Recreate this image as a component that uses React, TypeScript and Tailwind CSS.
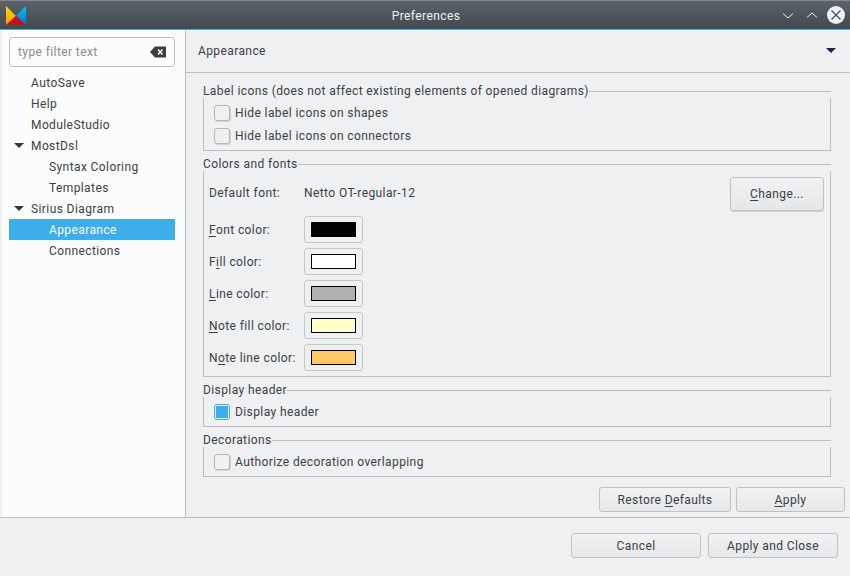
import * as React from "react"

const font = "font-['Roboto','Noto_Sans',sans-serif]"

function Mn({ children }: { children: string }) {
  return <span className="underline underline-offset-2">{children}</span>
}

function Logo() {
  return (
    <svg width="20" height="19" viewBox="0 0 20 19">
      <defs>
        <linearGradient id="yel" x1="0" y1="0" x2="0" y2="1">
          <stop offset="0" stopColor="#ffe000" />
          <stop offset="1" stopColor="#f59a00" />
        </linearGradient>
        <linearGradient id="blu" x1="0" y1="0" x2="0" y2="1">
          <stop offset="0" stopColor="#00c8f0" />
          <stop offset="1" stopColor="#0070d8" />
        </linearGradient>
      </defs>
      <polygon points="0,0 10,10 0,19" fill="url(#yel)" />
      <polygon points="20,0 10,10 20,19" fill="url(#blu)" />
      <polygon points="0,19 10,10 20,19" fill="#c8101c" />
    </svg>
  )
}

function TitleBar() {
  return (
    <div className="h-[29px] shrink-0 flex items-center bg-gradient-to-b from-[#5a636b] to-[#42494f] border-t border-[#85837f]">
      <div className="pl-[6px] pt-[1px] flex">
        <Logo />
      </div>
      <div className="flex-1 text-center text-[12px] text-[#eff0f1] pl-[44px] pt-[2px]">Preferences</div>
      <div className="flex items-center pr-[5px]">
        <svg width="12" height="8" viewBox="0 0 12 8" className="mr-[12px] mt-[1px]">
          <path d="M1 1.5 L6 6 L11 1.5" fill="none" stroke="#eff0f1" strokeWidth="1" />
        </svg>
        <svg width="12" height="8" viewBox="0 0 12 8" className="mr-[9px]">
          <path d="M1 6.5 L6 2 L11 6.5" fill="none" stroke="#eff0f1" strokeWidth="1" />
        </svg>
        <svg width="18" height="18" viewBox="0 0 18 18">
          <circle cx="9" cy="9" r="9" fill="#eff0f1" />
          <path d="M4.5 4.5 L13.5 13.5 M13.5 4.5 L4.5 13.5" stroke="#4a5158" strokeWidth="1.3" />
        </svg>
      </div>
    </div>
  )
}

function TreeRow({ label, depth, open, selected }: { label: string; depth: 0 | 1; open?: boolean; selected?: boolean }) {
  return (
    <div
      className={
        "h-[21px] flex items-center " +
        (depth === 1 ? "pl-[40px] " : "pl-[22px] ") +
        (selected ? "bg-[#3daee9] text-[#fcfcfc]" : "text-[#3b4045]")
      }
    >
      {open && (
        <svg width="10" height="5" viewBox="0 0 10 5" className="-ml-[17px] mr-[7px]">
          <polygon points="0,0 10,0 5,5" fill="#31363b" />
        </svg>
      )}
      {label}
    </div>
  )
}

function Sidebar() {
  return (
    <div className="ml-[2px] w-[184px] shrink-0 bg-[#fcfcfc] border-r border-[#bcbebf] pl-[7px] pr-[10px] pt-[7px]">
      <div className="h-[30px] border border-[#bcbebf] rounded-[3px] bg-[#fcfcfc] flex items-center justify-between pl-[8px] pr-[8px] mb-[5px]">
        <span className="text-[#8a8d8f]">type filter text</span>
        <svg width="16" height="12" viewBox="0 0 16 12">
          <polygon points="0,6 5,0.5 16,0.5 16,11.5 5,11.5" fill="#3b3f43" />
          <path d="M8 3.5 L12.5 8.5 M12.5 3.5 L8 8.5" stroke="#fcfcfc" strokeWidth="1.5" />
        </svg>
      </div>
      <TreeRow label="AutoSave" depth={0} />
      <TreeRow label="Help" depth={0} />
      <TreeRow label="ModuleStudio" depth={0} />
      <TreeRow label="MostDsl" depth={0} open />
      <TreeRow label="Syntax Coloring" depth={1} />
      <TreeRow label="Templates" depth={1} />
      <TreeRow label="Sirius Diagram" depth={0} open />
      <TreeRow label="Appearance" depth={1} selected />
      <TreeRow label="Connections" depth={1} />
    </div>
  )
}

function Group({ title, children }: { title: string; children: React.ReactNode }) {
  return (
    <div>
      <div className="h-[14px] flex items-center">
        <span className="leading-[14px] shrink-0">{title}</span>
        <div className="flex-1 h-px bg-[#bcbebf]" />
      </div>
      <div className="border-l border-r border-b border-[#bcbebf]">{children}</div>
    </div>
  )
}

function Check({ label, checked }: { label: string; checked?: boolean }) {
  return (
    <div className="h-[23px] flex items-center pl-[10px] gap-[5px]">
      {checked ? (
        <div className="w-[16px] h-[16px] rounded-[3px] border border-[#3daee9] bg-[#eff0f1] flex items-center justify-center">
          <div className="w-[12px] h-[12px] bg-[#3daee9]" />
        </div>
      ) : (
        <div className="w-[16px] h-[16px] rounded-[3px] border border-[#b4b6b8] bg-[#eff0f1] shadow-[1px_1px_0_#d0d2d3]" />
      )}
      <span>{label}</span>
    </div>
  )
}

function ColorRow({ pre, mn, post, color }: { pre: string; mn: string; post: string; color: string }) {
  return (
    <div className="flex items-start h-[28px]">
      <div className="w-[100px] pl-[5px] whitespace-nowrap leading-[28px]">
        {pre}
        <Mn>{mn}</Mn>
        {post}
      </div>
      <div className="w-[59px] h-[27px] rounded-[3px] border border-[#c4c6c7] bg-[#eff0f1] flex items-center justify-center">
        <div className="w-[45px] h-[15px] border border-black" style={{ backgroundColor: color }} />
      </div>
    </div>
  )
}

function Btn({ w, children }: { w: string; children: React.ReactNode }) {
  return (
    <div className={"h-[25px] rounded-[3px] border border-[#c0c2c3] bg-gradient-to-b from-[#f1f2f3] to-[#e6e7e8] flex items-center justify-center " + w}>
      {children}
    </div>
  )
}

export default function App() {
  return (
    <div className={"w-[850px] h-[576px] flex flex-col overflow-hidden bg-[#eff0f1] text-[12px] tracking-[0.4px] text-[#3b4045] " + font}>
      <TitleBar />
      <div className="h-px shrink-0 bg-[#3daee9]" />
      <div className="h-[487px] shrink-0 flex">
        <Sidebar />
        <div className="flex-1 flex flex-col">
          <div className="h-[43px] shrink-0 border-b border-[#bcbebf] flex items-center justify-between pl-[12px] pr-[14px] pb-[1px]">
            <span>Appearance</span>
            <svg width="10" height="5" viewBox="0 0 10 5">
              <polygon points="0,0 10,0 5,5" fill="#2a1f4a" />
            </svg>
          </div>
          <div className="pl-[17px] pr-[19px] pt-[11px] flex flex-col gap-[6px]">
            <Group title="Label icons (does not affect existing elements of opened diagrams)">
              <div className="py-[3px]">
                <Check label="Hide label icons on shapes" />
                <Check label="Hide label icons on connectors" />
              </div>
            </Group>
            <Group title="Colors and fonts">
              <div className="pt-[6px] pb-[4px] pr-[6px]">
                <div className="h-[34px] flex items-center justify-between mb-[5px]">
                  <div className="flex pb-[2px]">
                    <span className="w-[100px] pl-[5px]">Default font:</span>
                    <span>Netto OT-regular-12</span>
                  </div>
                  <Btn w="w-[94px] !h-[34px] shadow-[0_1px_0_#d0d2d3]">
                    <span className="pb-[1px]">
                      <Mn>C</Mn>hange...
                    </span>
                  </Btn>
                </div>
                <div className="flex flex-col gap-[4px]">
                  <ColorRow pre="" mn="F" post="ont color:" color="#000000" />
                  <ColorRow pre="F" mn="i" post="ll color:" color="#ffffff" />
                  <ColorRow pre="" mn="L" post="ine color:" color="#b0b0b0" />
                  <ColorRow pre="" mn="N" post="ote fill color:" color="#ffffc8" />
                  <ColorRow pre="N" mn="o" post="te line color:" color="#ffc864" />
                </div>
              </div>
            </Group>
            <Group title="Display header">
              <div className="py-[3px]">
                <Check label="Display header" checked />
              </div>
            </Group>
            <Group title="Decorations">
              <div className="py-[3px]">
                <Check label="Authorize decoration overlapping" />
              </div>
            </Group>
          </div>
          <div className="pt-[10px] pr-[5px] flex justify-end gap-[5px]">
            <Btn w="w-[132px]">
              <span>
                Restore <Mn>D</Mn>efaults
              </span>
            </Btn>
            <Btn w="w-[109px]">
              <span>
                <Mn>A</Mn>pply
              </span>
            </Btn>
          </div>
        </div>
      </div>
      <div className="h-px shrink-0 bg-[#bcbebf]" />
      <div className="pt-[15px] pr-[12px] flex justify-end gap-[7px]">
        <Btn w="w-[130px]">Cancel</Btn>
        <Btn w="w-[130px]">Apply and Close</Btn>
      </div>
    </div>
  )
}
